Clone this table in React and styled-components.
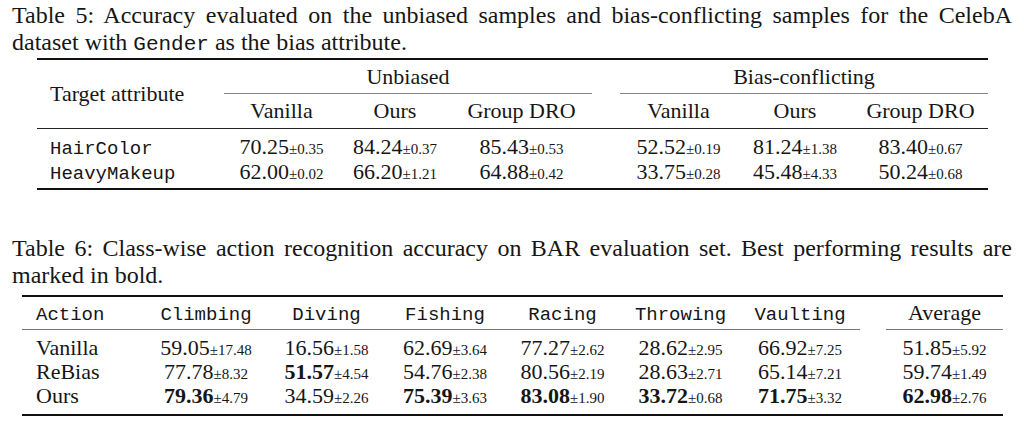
import React from 'react'
import styled, { createGlobalStyle } from 'styled-components'

const GlobalStyle = createGlobalStyle`
  body {
    margin: 0;
    background: #fff;
    color: #161616;
    font-family: "Liberation Serif", "Times New Roman", serif;
  }
`

const Page = styled.div`
  width: 1024px;
  height: 423px;
  overflow: hidden;
  box-sizing: border-box;
  padding: 2px 12px 0;
`

const Caption = styled.div`
  margin-top: ${p => p.$top || 0}px;
  width: 1000px;
  font-size: 24px;
  line-height: 27px;
`

// first line of a LaTeX caption is stretched to the full width, the last one is not
const CaptionLine = styled.div`
  white-space: nowrap;
  text-align: ${p => (p.$fill ? 'justify' : 'left')};
  text-align-last: ${p => (p.$fill ? 'justify' : 'left')};
`

const Tt = styled.span`
  font-family: "Liberation Mono", "Courier New", monospace;
  font-size: ${p => p.$size || 19}px;
  line-height: 1;
`

const Table = styled.table`
  border-collapse: separate;
  border-spacing: 0;
  table-layout: fixed;
  margin-left: ${p => p.$indent}px;
  margin-top: ${p => p.$top}px;
  border-top: 2px solid #111;
  border-bottom: 2px solid #111;
  font-size: 22px;
`

const Col = styled.col`
  width: ${p => p.$w}px;
`

const Head = styled.th`
  padding: 0;
  font-weight: normal;
  height: ${p => p.$h}px;
  line-height: 24px;
  vertical-align: middle;
  text-align: ${p => (p.$left ? 'left' : 'center')};
  padding-left: ${p => (p.$left ? p.$left : 0)}px;
  border-bottom: ${p => (p.$rule ? `1px solid ${p.$rule}` : 'none')};
  white-space: nowrap;
`

const Body = styled.tbody`
  tr:first-child td {
    padding-top: ${p => p.$pt}px;
  }
  tr:last-child td {
    padding-bottom: ${p => p.$pb}px;
  }
`

const Cell = styled.td`
  padding: 0;
  height: ${p => p.$h}px;
  line-height: ${p => p.$h}px;
  vertical-align: middle;
  text-align: ${p => (p.$left ? 'left' : 'center')};
  padding-left: ${p => (p.$left ? p.$left : 0)}px;
  white-space: nowrap;
`

const Num = styled.span`
  font-weight: ${p => (p.$bold ? 'bold' : 'normal')};
`

const Pm = styled.span`
  font-size: 15px;
  line-height: 1;
`

function Value({ v }) {
  const [mean, sd, bold] = v
  return (
    <>
      <Num $bold={bold}>{mean}</Num>
      <Pm>±{sd}</Pm>
    </>
  )
}

const celebCols = [187, 115, 112, 141, 28, 117, 116, 135]
const celebRows = [
  {
    name: 'HairColor',
    vals: [['70.25', '0.35'], ['84.24', '0.37'], ['85.43', '0.53'], ['52.52', '0.19'], ['81.24', '1.38'], ['83.40', '0.67']],
  },
  {
    name: 'HeavyMakeup',
    vals: [['62.00', '0.02'], ['66.20', '1.21'], ['64.88', '0.42'], ['33.75', '0.28'], ['45.48', '4.33'], ['50.24', '0.68']],
  },
]
const methods = ['Vanilla', 'Ours', 'Group DRO']

const barCols = [123, 122, 119, 118, 117, 119, 120, 26, 117]
const actions = ['Climbing', 'Diving', 'Fishing', 'Racing', 'Throwing', 'Vaulting']
const barRows = [
  {
    name: 'Vanilla',
    vals: [['59.05', '17.48'], ['16.56', '1.58'], ['62.69', '3.64'], ['77.27', '2.62'], ['28.62', '2.95'], ['66.92', '7.25']],
    avg: ['51.85', '5.92'],
  },
  {
    name: 'ReBias',
    vals: [['77.78', '8.32'], ['51.57', '4.54', true], ['54.76', '2.38'], ['80.56', '2.19'], ['28.63', '2.71'], ['65.14', '7.21']],
    avg: ['59.74', '1.49'],
  },
  {
    name: 'Ours',
    vals: [['79.36', '4.79', true], ['34.59', '2.26'], ['75.39', '3.63', true], ['83.08', '1.90', true], ['33.72', '0.68', true], ['71.75', '3.32', true]],
    avg: ['62.98', '2.76', true],
  },
]

function CelebATable() {
  return (
    <Table $indent={25} $top={2}>
      <colgroup>
        {celebCols.map((w, i) => <Col key={i} $w={w} />)}
      </colgroup>
      <thead>
        <tr>
          <Head rowSpan={2} $left={13} $rule="#222">Target attribute</Head>
          <Head colSpan={3} $h={33} $rule="#888">Unbiased</Head>
          <Head />
          <Head colSpan={3} $h={33} $rule="#888">Bias-conflicting</Head>
        </tr>
        <tr>
          {methods.map(m => <Head key={'u' + m} $h={34} $rule="#222">{m}</Head>)}
          <Head $h={34} $rule="#222" />
          {methods.map(m => <Head key={'b' + m} $h={34} $rule="#222">{m}</Head>)}
        </tr>
      </thead>
      <Body $pt={5} $pb={4}>
        {celebRows.map(r => (
          <tr key={r.name}>
            <Cell $h={25} $left={13}><Tt>{r.name}</Tt></Cell>
            {r.vals.slice(0, 3).map((v, i) => <Cell key={i} $h={25}><Value v={v} /></Cell>)}
            <Cell $h={25} />
            {r.vals.slice(3).map((v, i) => <Cell key={i} $h={25}><Value v={v} /></Cell>)}
          </tr>
        ))}
      </Body>
    </Table>
  )
}

function BarTable() {
  return (
    <Table $indent={10} $top={6}>
      <colgroup>
        {barCols.map((w, i) => <Col key={i} $w={w} />)}
      </colgroup>
      <thead>
        <tr>
          <Head $h={32} $left={14} $rule="#777"><Tt>Action</Tt></Head>
          {actions.map(a => <Head key={a} $h={32} $rule="#777"><Tt>{a}</Tt></Head>)}
          <Head $h={32} />
          <Head $h={32} $rule="#777">Average</Head>
        </tr>
      </thead>
      <Body $pt={6} $pb={6}>
        {barRows.map(r => (
          <tr key={r.name}>
            <Cell $h={24} $left={14}>{r.name}</Cell>
            {r.vals.map((v, i) => <Cell key={i} $h={24}><Value v={v} /></Cell>)}
            <Cell $h={24} />
            <Cell $h={24}><Value v={r.avg} /></Cell>
          </tr>
        ))}
      </Body>
    </Table>
  )
}

export default function App() {
  return (
    <Page>
      <GlobalStyle />
      <Caption>
        <CaptionLine $fill>
          Table 5: Accuracy evaluated on the unbiased samples and bias-conflicting samples for the CelebA
        </CaptionLine>
        <CaptionLine>
          dataset with <Tt $size={21}>Gender</Tt> as the bias attribute.
        </CaptionLine>
      </Caption>
      <CelebATable />
      <Caption $top={45}>
        <CaptionLine $fill>
          Table 6: Class-wise action recognition accuracy on BAR evaluation set. Best performing results are
        </CaptionLine>
        <CaptionLine>marked in bold.</CaptionLine>
      </Caption>
      <BarTable />
    </Page>
  )
}
